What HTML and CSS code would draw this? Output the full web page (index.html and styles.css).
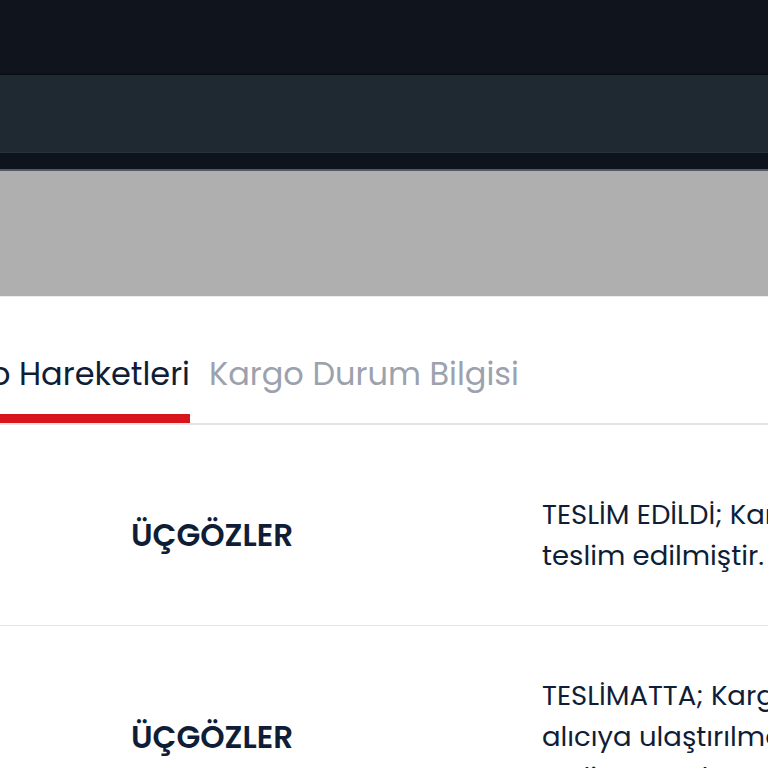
FILE: index.html
```html
<!DOCTYPE html>
<html lang="tr">
<head>
<meta charset="utf-8">
<title>Kargo Hareketleri</title>
<link rel="stylesheet" href="styles.css">
</head>
<body>
<header class="site-header">
  <div class="topbar"></div>
  <div class="navband"></div>
  <div class="navfoot"></div>
</header>
<section class="hero"></section>
<main class="content">
  <nav class="tabs">
    <div class="tab-clip">
      <span class="tab tab-active">Kargo Hareketleri</span>
    </div>
    <span class="tab">Kargo Durum Bilgisi</span>
  </nav>
  <div class="rows">
    <div class="row">
      <div class="name">ÜÇGÖZLER</div>
      <div class="desc">
        <span class="line">TESLİM EDİLDİ; Kargonuz alıcıya</span>
        <span class="line">teslim edilmiştir.</span>
      </div>
    </div>
    <div class="row">
      <div class="name">ÜÇGÖZLER</div>
      <div class="desc">
        <span class="line">TESLİMATTA; Kargonuz kurye ile</span>
        <span class="line">alıcıya ulaştırılmak üzere</span>
        <span class="line">teslimatta dır.</span>
      </div>
    </div>
  </div>
</main>
</body>
</html>
```

FILE: styles.css
```css
html, body {
  margin: 0;
  padding: 0;
  background: #ffffff;
  overflow: hidden;
  width: 768px;
  height: 768px;
}

body {
  font-family: "Poppins", "Open Sans", "Noto Sans", sans-serif;
  color: #0f1e36;
}

.site-header {
  display: flex;
  flex-direction: column;
}

.topbar {
  height: 73px;
  background: #10141c;
  border-bottom: 2px solid #0b1018;
}

.navband {
  height: 77px;
  background: #1e2932;
  border-bottom: 1px solid #27323b;
}

.navfoot {
  height: 16px;
  background: #0e131d;
}

.hero {
  height: 125px;
  background: #afafaf;
  border-top: 2px solid #56595f;
}

.content {
  border-top: 1px solid #ececec;
}

.tabs {
  display: flex;
  align-items: flex-end;
  gap: 19px;
  border-bottom: 2px solid #e4e4e6;
}

.tab-clip {
  width: 190px;
  display: flex;
  justify-content: flex-end;
  overflow: hidden;
  border-bottom: 9px solid #d8141d;
}

.tab {
  font-size: 32px;
  line-height: 45px;
  white-space: nowrap;
  color: #9ca2ad;
  padding: 54px 0 18px;
}

.tab-active {
  color: #0f1e36;
  flex-shrink: 0;
}

.tabs > .tab {
  padding-bottom: 27px;
}

.rows {
  margin-top: 20px;
}

.row {
  display: grid;
  grid-template-columns: 411px auto;
  align-items: center;
  padding: 49px 0 49px 131px;
  border-bottom: 1px solid #e6e6e6;
}

.name {
  font-size: 31px;
  font-weight: 600;
  line-height: 40px;
  color: #0f1e36;
}

.desc {
  display: flex;
  flex-direction: column;
  font-size: 27.5px;
  line-height: 41px;
  color: #0f1e36;
}

.line {
  white-space: nowrap;
}
```
